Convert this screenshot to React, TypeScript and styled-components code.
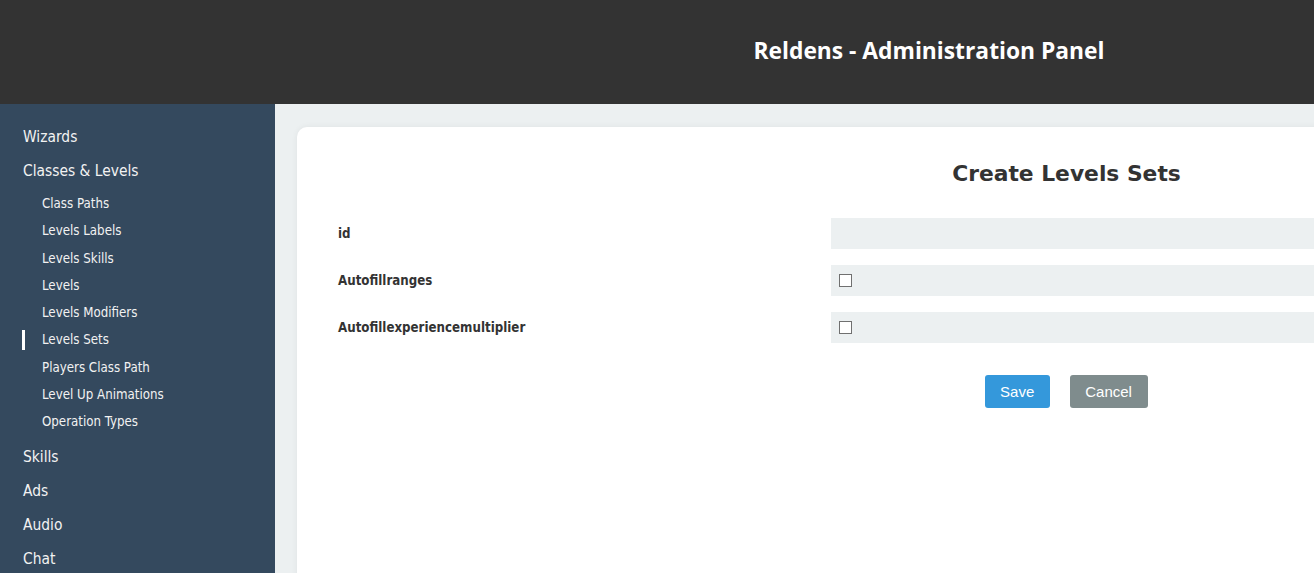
import React from 'react';
import styled, { createGlobalStyle } from 'styled-components';

const GlobalStyle = createGlobalStyle`
    html, body {
        margin: 0;
        padding: 0;
        overflow: hidden;
        background: #ecf0f1;
    }
    * {
        box-sizing: border-box;
    }
`

const Page = styled.div`
    width: 1858px;
    min-height: 573px;
    display: flex;
    flex-direction: column;
    font-family: "DejaVu Sans", Verdana, sans-serif;
`

const Header = styled.header`
    height: 104px;
    background-color: #333333;
    display: flex;
    align-items: center;
    justify-content: center;
`

const HeaderTitle = styled.h1`
    margin: 0;
    color: #ffffff;
    font-family: "Open Sans", sans-serif;
    font-size: 22.8px;
    font-weight: 700;
    padding-bottom: 4px;
`

const Body = styled.div`
    display: flex;
    flex: 1;
`

const Sidebar = styled.nav`
    width: 275px;
    flex-shrink: 0;
    background-color: #34495e;
    padding: 16px 0 0 0;
    min-height: 469px;
`

const TopItem = styled.div`
    color: #f2f2f2;
    font-size: 15.4px;
    font-stretch: condensed;
    height: 34px;
    line-height: 34px;
    padding-left: 23px;
`

const SubList = styled.div`
    padding: 2px 0 4px 0;
`

const SubItem = styled.div<{ $active?: boolean }>`
    position: relative;
    color: #f2f2f2;
    font-size: 13.2px;
    font-stretch: condensed;
    height: 27.3px;
    line-height: 27px;
    padding-left: 42px;

    &::before {
        content: '';
        display: ${({ $active }) => ($active ? 'block' : 'none')};
        position: absolute;
        left: 22px;
        top: 4px;
        width: 3px;
        height: 20px;
        background: #ffffff;
    }
`

const Main = styled.main`
    flex: 1;
    padding: 23px 22px 0 22px;
`

const Card = styled.section`
    background: #ffffff;
    border-radius: 10px;
    box-shadow: 0 0 6px rgba(0, 0, 0, 0.06);
    padding: 31px 41px 0 41px;
    min-height: 460px;
`

const Title = styled.h2`
    margin: 0 0 28px 0;
    text-align: center;
    color: #333333;
    font-size: 21.8px;
    font-weight: 700;
    line-height: 32px;
`

const Form = styled.form`
    display: flex;
    flex-direction: column;
    gap: 16px;
`

const Row = styled.div`
    display: flex;
    align-items: center;
`

const Label = styled.label`
    width: 493px;
    flex-shrink: 0;
    color: #333333;
    font-size: 13.2px;
    font-weight: 700;
    font-stretch: condensed;
`

const Field = styled.div`
    flex: 1;
    height: 31px;
    background: #ecf0f1;
    display: flex;
    align-items: center;
    padding-left: 8px;
`

const Check = styled.span`
    width: 13px;
    height: 13px;
    border: 1px solid #707070;
    background: #ffffff;
`

const Actions = styled.div`
    display: flex;
    justify-content: center;
    gap: 20px;
    margin-top: 32px;
`

const Button = styled.button<{ $variant: 'primary' | 'secondary' }>`
    height: 33px;
    padding: 0 16px 0 15px;
    border: none;
    border-radius: 3px;
    color: #ffffff;
    font-family: "Liberation Sans", Arial, sans-serif;
    font-size: 15px;
    background: ${({ $variant }) => ($variant === 'primary' ? '#3498db' : '#7f8c8d')};
`

const subItems = [
    'Class Paths',
    'Levels Labels',
    'Levels Skills',
    'Levels',
    'Levels Modifiers',
    'Levels Sets',
    'Players Class Path',
    'Level Up Animations',
    'Operation Types',
];

const fields = [
    { label: 'id', type: 'text' },
    { label: 'Autofillranges', type: 'checkbox' },
    { label: 'Autofillexperiencemultiplier', type: 'checkbox' },
];

const App = () => {
    return (
        <>
            <GlobalStyle />
            <Page>
                <Header>
                    <HeaderTitle>Reldens - Administration Panel</HeaderTitle>
                </Header>
                <Body>
                    <Sidebar>
                        <TopItem>Wizards</TopItem>
                        <TopItem>Classes &amp; Levels</TopItem>
                        <SubList>
                            {subItems.map((item) => (
                                <SubItem key={item} $active={item === 'Levels Sets'}>{item}</SubItem>
                            ))}
                        </SubList>
                        <TopItem>Skills</TopItem>
                        <TopItem>Ads</TopItem>
                        <TopItem>Audio</TopItem>
                        <TopItem>Chat</TopItem>
                    </Sidebar>
                    <Main>
                        <Card>
                            <Title>Create Levels Sets</Title>
                            <Form onSubmit={(e) => e.preventDefault()}>
                                {fields.map((f) => (
                                    <Row key={f.label}>
                                        <Label>{f.label}</Label>
                                        <Field>{f.type === 'checkbox' && <Check />}</Field>
                                    </Row>
                                ))}
                            </Form>
                            <Actions>
                                <Button $variant="primary">Save</Button>
                                <Button $variant="secondary">Cancel</Button>
                            </Actions>
                        </Card>
                    </Main>
                </Body>
            </Page>
        </>
    );
};

export default App;
